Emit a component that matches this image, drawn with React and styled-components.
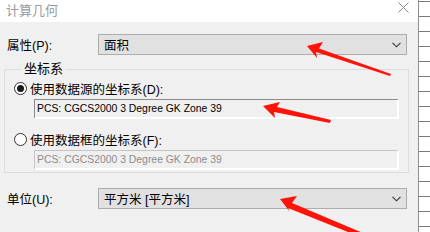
import styled, { createGlobalStyle } from "styled-components";

const GlobalStyle = createGlobalStyle`
    html, body {
        margin: 0;
        padding: 0;
        background: #ffffff;
    }
    body {
        font-family: "Liberation Sans", "Noto Sans CJK SC", sans-serif;
        font-size: 12px;
        color: #000000;
    }
`;

const fontStack = `"Liberation Sans", "Noto Sans CJK SC", sans-serif`;

const Screen = styled.div`
    position: relative;
    display: flex;
    width: 430px;
    height: 232px;
    overflow: hidden;
`;

const Dialog = styled.div`
    display: flex;
    flex-direction: column;
    width: 418px;
    height: 232px;
    background: #f0f0f0;
`;

const TitleBar = styled.div`
    display: flex;
    align-items: center;
    justify-content: space-between;
    height: 22px;
    padding: 0 9px 0 6px;
    background: #ffffff;
    color: #9a9a9a;
    font-family: ${fontStack};
    font-size: 13px;

    span {
        margin-top: -3px;
    }
`;

const CloseIcon = styled.svg`
    margin-top: -7px;
`;

const Body = styled.div`
    display: flex;
    flex-direction: column;
    padding: 12px 11px 0 4px;
`;

const FieldRow = styled.div`
    display: flex;
    align-items: center;
    height: 21px;
    margin-top: ${(p) => p.$top || 0}px;
    padding-left: 3px;
`;

const Label = styled.div`
    width: 91px;
    font-family: ${fontStack};
    font-size: 12.5px;
`;

const Combo = styled.div`
    flex: 1;
    display: flex;
    align-items: center;
    justify-content: space-between;
    height: 21px;
    box-sizing: border-box;
    padding: 0 5px 0 5px;
    background: #e1e1e1;
    border: 1px solid #adadad;
    font-family: ${fontStack};
    font-size: 12.5px;
`;

const Group = styled.fieldset`
    margin: 7px 0 0 0;
    padding: 0 9px 9px 9px;
    height: 111px;
    box-sizing: border-box;
    border: 1px solid #dcdcdc;
    border-radius: 0;
    display: flex;
    flex-direction: column;

    legend {
        padding: 0 3px;
        margin-left: 7px;
        font-family: ${fontStack};
        font-size: 13px;
        line-height: 14px;
    }
`;

const RadioRow = styled.label`
    display: flex;
    align-items: center;
    gap: 3px;
    height: 16px;
    margin-top: ${(p) => p.$top}px;
    font-family: ${fontStack};
    font-size: 12.5px;
`;

const RadioCircle = styled.span`
    width: 13px;
    height: 13px;
    box-sizing: border-box;
    border-radius: 50%;
    border: 1px solid #333333;
    background: #ffffff;
    display: flex;
    align-items: center;
    justify-content: center;

    &::after {
        content: "";
        width: 7px;
        height: 7px;
        border-radius: 50%;
        background: ${(p) => (p.$checked ? "#1a1a1a" : "transparent")};
    }
`;

const TextBox = styled.div`
    display: flex;
    align-items: center;
    height: 20px;
    box-sizing: border-box;
    margin: ${(p) => p.$top}px 0 0 20px;
    width: 365px;
    padding-left: 2px;
    background: #f0f0f0;
    border-top: 1px solid ${(p) => (p.$disabled ? "#c4c4c4" : "#8a8a8a")};
    border-left: 1px solid ${(p) => (p.$disabled ? "#c4c4c4" : "#8a8a8a")};
    border-right: 2px solid #ffffff;
    border-bottom: 2px solid #ffffff;
    color: ${(p) => (p.$disabled ? "#8c8c8c" : "#000000")};
    font-family: "Liberation Sans", sans-serif;
    font-size: 10.4px;
    white-space: nowrap;
`;

const SideStrip = styled.div`
    flex: 1;
    border-left: 1px solid #8f8f8f;
    background: repeating-linear-gradient(
        to bottom,
        #ffffff 0px,
        #ffffff 1px,
        #7a7a7a 1px,
        #7a7a7a 2px,
        #ffffff 2px,
        #ffffff 15px
    );
`;

const ArrowLayer = styled.svg`
    position: absolute;
    left: 0;
    top: 0;
    pointer-events: none;
`;

const Chevron = () => (
    <svg width="9" height="6" viewBox="0 0 9 6">
        <path d="M0.5 0.8 L4.5 4.8 L8.5 0.8" fill="none" stroke="#333" strokeWidth="1.1" />
    </svg>
);

const arrows = [
    "M307 46 L323 42 L319 48.5 L391 74 L390 76 L316 52 L317 58 Z",
    "M263 106 L280 102 L277 107 L331 120 L330 123 L274 112 L275 118 Z",
    "M280 199 L297 196 L292 203 L370 236 L358 236 L288 208 L290 212 Z",
];

const App = () => {
    return (
        <Screen>
            <GlobalStyle />
            <Dialog>
                <TitleBar>
                    <span>计算几何</span>
                    <CloseIcon width="11" height="11" viewBox="0 0 11 11">
                        <path d="M0.5 0.5 L10.5 10.5 M10.5 0.5 L0.5 10.5" stroke="#8a8a8a" strokeWidth="1" />
                    </CloseIcon>
                </TitleBar>
                <Body>
                    <FieldRow>
                        <Label>属性(P):</Label>
                        <Combo>
                            <span>面积</span>
                            <Chevron />
                        </Combo>
                    </FieldRow>
                    <Group>
                        <legend>坐标系</legend>
                        <RadioRow $top={4}>
                            <RadioCircle $checked />
                            使用数据源的坐标系(D):
                        </RadioRow>
                        <TextBox $top={3}>PCS: CGCS2000 3 Degree GK Zone 39</TextBox>
                        <RadioRow $top={12}>
                            <RadioCircle />
                            使用数据框的坐标系(F):
                        </RadioRow>
                        <TextBox $top={3} $disabled>PCS: CGCS2000 3 Degree GK Zone 39</TextBox>
                    </Group>
                    <FieldRow $top={15}>
                        <Label>单位(U):</Label>
                        <Combo>
                            <span>平方米 [平方米]</span>
                            <Chevron />
                        </Combo>
                    </FieldRow>
                </Body>
            </Dialog>
            <SideStrip />
            <ArrowLayer width="430" height="232" viewBox="0 0 430 232">
                {arrows.map((d, i) => (
                    <path key={i} d={d} fill="#ff1208" />
                ))}
            </ArrowLayer>
        </Screen>
    );
};

export default App;
